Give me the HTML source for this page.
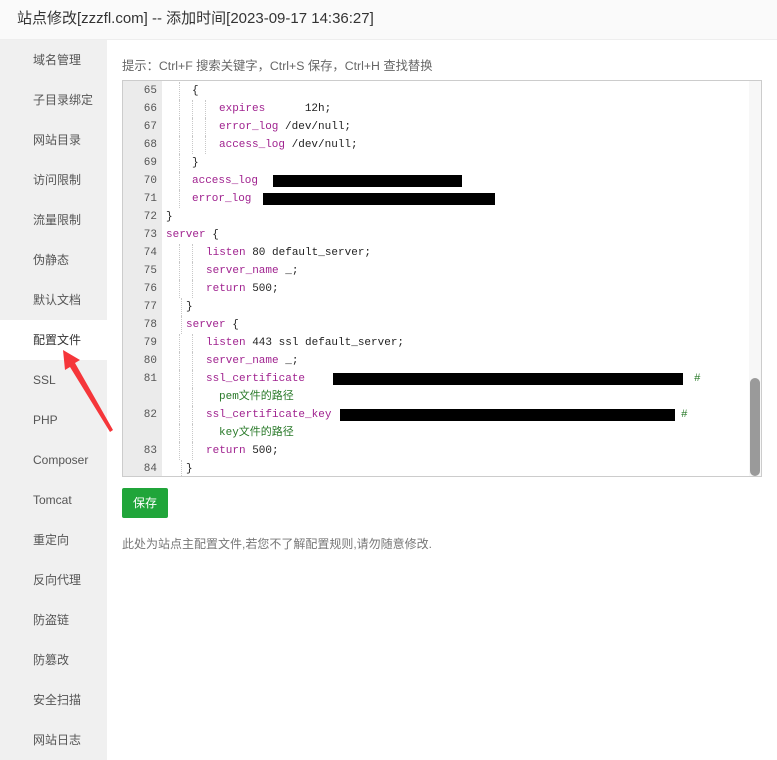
<!DOCTYPE html>
<html><head><meta charset="utf-8"><style>
*{margin:0;padding:0;box-sizing:border-box}
body{width:777px;height:760px;background:#fff;font-family:"Liberation Sans","Noto Sans CJK SC",sans-serif;position:relative;overflow:hidden;color:#333}
.title{position:absolute;left:0;top:0;width:777px;height:40px;background:#fafafa;border-bottom:1px solid #eee;font-size:15px;line-height:38px;padding-left:17px;color:#333}
.side{position:absolute;left:0;top:40px;width:107px;height:720px;background:#f0f0f0}
.side div{height:40px;line-height:40px;padding-left:33px;font-size:12px;color:#555}
.side div.on{background:#fff;color:#333}
.tip{position:absolute;left:122px;top:56px;font-size:12.3px;color:#666}
.ed{position:absolute;left:122px;top:80px;width:640px;height:397px;border:1px solid #ccc;background:#fff;overflow:hidden}
.gut{position:absolute;left:0;top:0;width:39px;height:100%;background:#ebebeb}
.code{position:absolute;left:0;top:1px;width:100%;font-family:"Liberation Mono","Noto Sans CJK SC",monospace;font-size:11px}
.l{height:18px;line-height:18px;position:relative;white-space:pre}
.n{position:absolute;left:0;width:34px;text-align:right;color:#555}
.t{position:absolute;color:#222}
.k{color:#a0228f}
.c{color:#2a7a2a}
.g{position:absolute;top:0;width:0;height:18px;border-left:1px dotted #c8c8c8}
.r{position:absolute;top:3px;background:#000;height:12px}
.sb{position:absolute;right:0;top:0;width:12px;height:100%;background:#f7f7f7}
.th{position:absolute;right:1px;top:297px;width:10px;height:98px;background:#9a9a9a;border-radius:5px}
.btn{position:absolute;left:122px;top:488px;width:46px;height:30px;background:#20a53a;color:#fff;border-radius:2px;font-size:12px;line-height:30px;text-align:center}
.note{position:absolute;left:122px;top:535px;font-size:12px;color:#777}
</style></head><body>
<div class="title">站点修改[zzzfl.com] -- 添加时间[2023-09-17 14:36:27]</div>
<div class="side">
<div>域名管理</div><div>子目录绑定</div><div>网站目录</div><div>访问限制</div><div>流量限制</div><div>伪静态</div><div>默认文档</div><div class="on">配置文件</div><div>SSL</div><div>PHP</div><div>Composer</div><div>Tomcat</div><div>重定向</div><div>反向代理</div><div>防盗链</div><div>防篡改</div><div>安全扫描</div><div>网站日志</div>
</div>
<div class="tip">提示：Ctrl+F 搜索关键字，Ctrl+S 保存，Ctrl+H 查找替换</div>
<div class="ed"><div class="gut"></div>
<div class="code">
<div class="l"><span class="n">65</span><i class="g" style="left:56px"></i><span class="t" style="left:69px">{</span></div>
<div class="l"><span class="n">66</span><i class="g" style="left:56px"></i><i class="g" style="left:69px"></i><i class="g" style="left:82px"></i><span class="t" style="left:96px"><span class="k">expires</span>      12h;</span></div>
<div class="l"><span class="n">67</span><i class="g" style="left:56px"></i><i class="g" style="left:69px"></i><i class="g" style="left:82px"></i><span class="t" style="left:96px"><span class="k">error_log</span> /dev/null;</span></div>
<div class="l"><span class="n">68</span><i class="g" style="left:56px"></i><i class="g" style="left:69px"></i><i class="g" style="left:82px"></i><span class="t" style="left:96px"><span class="k">access_log</span> /dev/null;</span></div>
<div class="l"><span class="n">69</span><i class="g" style="left:56px"></i><span class="t" style="left:69px">}</span></div>
<div class="l"><span class="n">70</span><i class="g" style="left:56px"></i><span class="t" style="left:69px"><span class="k">access_log</span></span><i class="r" style="left:150px;width:189px"></i></div>
<div class="l"><span class="n">71</span><i class="g" style="left:56px"></i><span class="t" style="left:69px"><span class="k">error_log</span></span><i class="r" style="left:140px;width:232px"></i></div>
<div class="l"><span class="n">72</span><span class="t" style="left:43px">}</span></div>
<div class="l"><span class="n">73</span><span class="t" style="left:43px"><span class="k">server</span> {</span></div>
<div class="l"><span class="n">74</span><i class="g" style="left:56px"></i><i class="g" style="left:69px"></i><span class="t" style="left:83px"><span class="k">listen</span> 80 default_server;</span></div>
<div class="l"><span class="n">75</span><i class="g" style="left:56px"></i><i class="g" style="left:69px"></i><span class="t" style="left:83px"><span class="k">server_name</span> _;</span></div>
<div class="l"><span class="n">76</span><i class="g" style="left:56px"></i><i class="g" style="left:69px"></i><span class="t" style="left:83px"><span class="k">return</span> 500;</span></div>
<div class="l"><span class="n">77</span><i class="g" style="left:58px"></i><span class="t" style="left:63px">}</span></div>
<div class="l"><span class="n">78</span><i class="g" style="left:58px"></i><span class="t" style="left:63px"><span class="k">server</span> {</span></div>
<div class="l"><span class="n">79</span><i class="g" style="left:56px"></i><i class="g" style="left:69px"></i><span class="t" style="left:83px"><span class="k">listen</span> 443 ssl default_server;</span></div>
<div class="l"><span class="n">80</span><i class="g" style="left:56px"></i><i class="g" style="left:69px"></i><span class="t" style="left:83px"><span class="k">server_name</span> _;</span></div>
<div class="l"><span class="n">81</span><i class="g" style="left:56px"></i><i class="g" style="left:69px"></i><span class="t" style="left:83px"><span class="k">ssl_certificate</span></span><i class="r" style="left:210px;width:350px"></i><span class="t c" style="left:571px">#</span></div>
<div class="l"><span class="n"></span><i class="g" style="left:56px"></i><i class="g" style="left:69px"></i><span class="t c" style="left:96px">pem文件的路径</span></div>
<div class="l"><span class="n">82</span><i class="g" style="left:56px"></i><i class="g" style="left:69px"></i><span class="t" style="left:83px"><span class="k">ssl_certificate_key</span></span><i class="r" style="left:217px;width:335px"></i><span class="t c" style="left:558px">#</span></div>
<div class="l"><span class="n"></span><i class="g" style="left:56px"></i><i class="g" style="left:69px"></i><span class="t c" style="left:96px">key文件的路径</span></div>
<div class="l"><span class="n">83</span><i class="g" style="left:56px"></i><i class="g" style="left:69px"></i><span class="t" style="left:83px"><span class="k">return</span> 500;</span></div>
<div class="l"><span class="n">84</span><i class="g" style="left:58px"></i><span class="t" style="left:63px">}</span></div>
</div>
<div class="sb"><div class="th"></div></div>
</div>
<div class="btn">保存</div>
<div class="note">此处为站点主配置文件,若您不了解配置规则,请勿随意修改.</div>
<svg style="position:absolute;left:0;top:0" width="777" height="760"><polygon points="63,350 80,360 75,363 113,430 110,432 70,367 65,370" fill="#f5363a"/></svg>
</body></html>
